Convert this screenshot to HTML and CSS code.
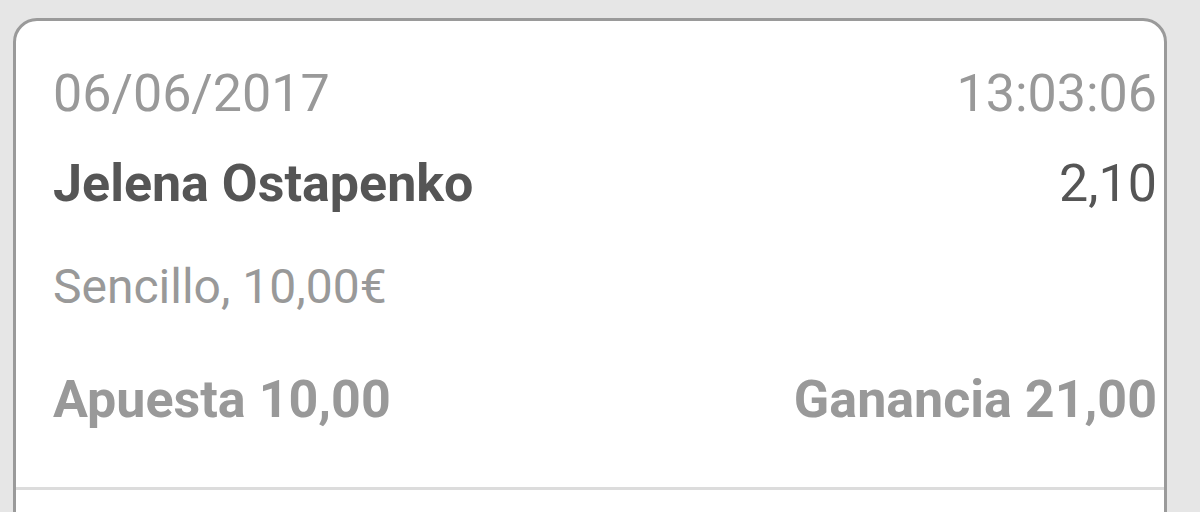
FILE: index.html
```html
<!DOCTYPE html>
<html lang="es">
<head>
<meta charset="utf-8">
<link rel="stylesheet" href="styles.css">
</head>
<body>
<div class="card">
  <div class="body">
    <div class="row row-date">
      <span class="muted">06/06/2017</span>
      <span class="muted">13:03:06</span>
    </div>
    <div class="row row-name">
      <span class="name">Jelena Ostapenko</span>
      <span class="odds">2,10</span>
    </div>
    <div class="row row-type">
      <span class="muted type">Sencillo, 10,00€</span>
    </div>
    <div class="row row-totals">
      <span class="total">Apuesta 10,00</span>
      <span class="total">Ganancia 21,00</span>
    </div>
  </div>
  <div class="divider"></div>
  <div class="footer"></div>
</div>
</body>
</html>
```
FILE: styles.css
```css
html, body {
  margin: 0;
  padding: 0;
}
body {
  background: #e6e6e6;
  font-family: Roboto, "Liberation Sans", sans-serif;
  height: 512px;
  overflow: hidden;
  padding-top: 18px;
  padding-left: 13px;
  box-sizing: border-box;
}
.card {
  width: 1154px;
  background: #fff;
  border: 3px solid #9a9a9a;
  border-radius: 24px;
  box-sizing: border-box;
  height: 560px;
}
.body {
  padding: 43px 7px 0 37px;
}
.row {
  display: flex;
  justify-content: space-between;
  align-items: baseline;
  font-size: 52px;
  line-height: 60px;
}
.row-name { margin-top: 30px; }
.row-type { margin-top: 43px; font-size: 48px; }
.row-totals { margin-top: 53px; }
.muted { color: #999; }
.name { color: #555; font-weight: 700; }
.odds { color: #555; }
.total { color: #999; font-weight: 700; }
.divider {
  margin-top: 57px;
  height: 3px;
  background: #dcdcdc;
}
```
